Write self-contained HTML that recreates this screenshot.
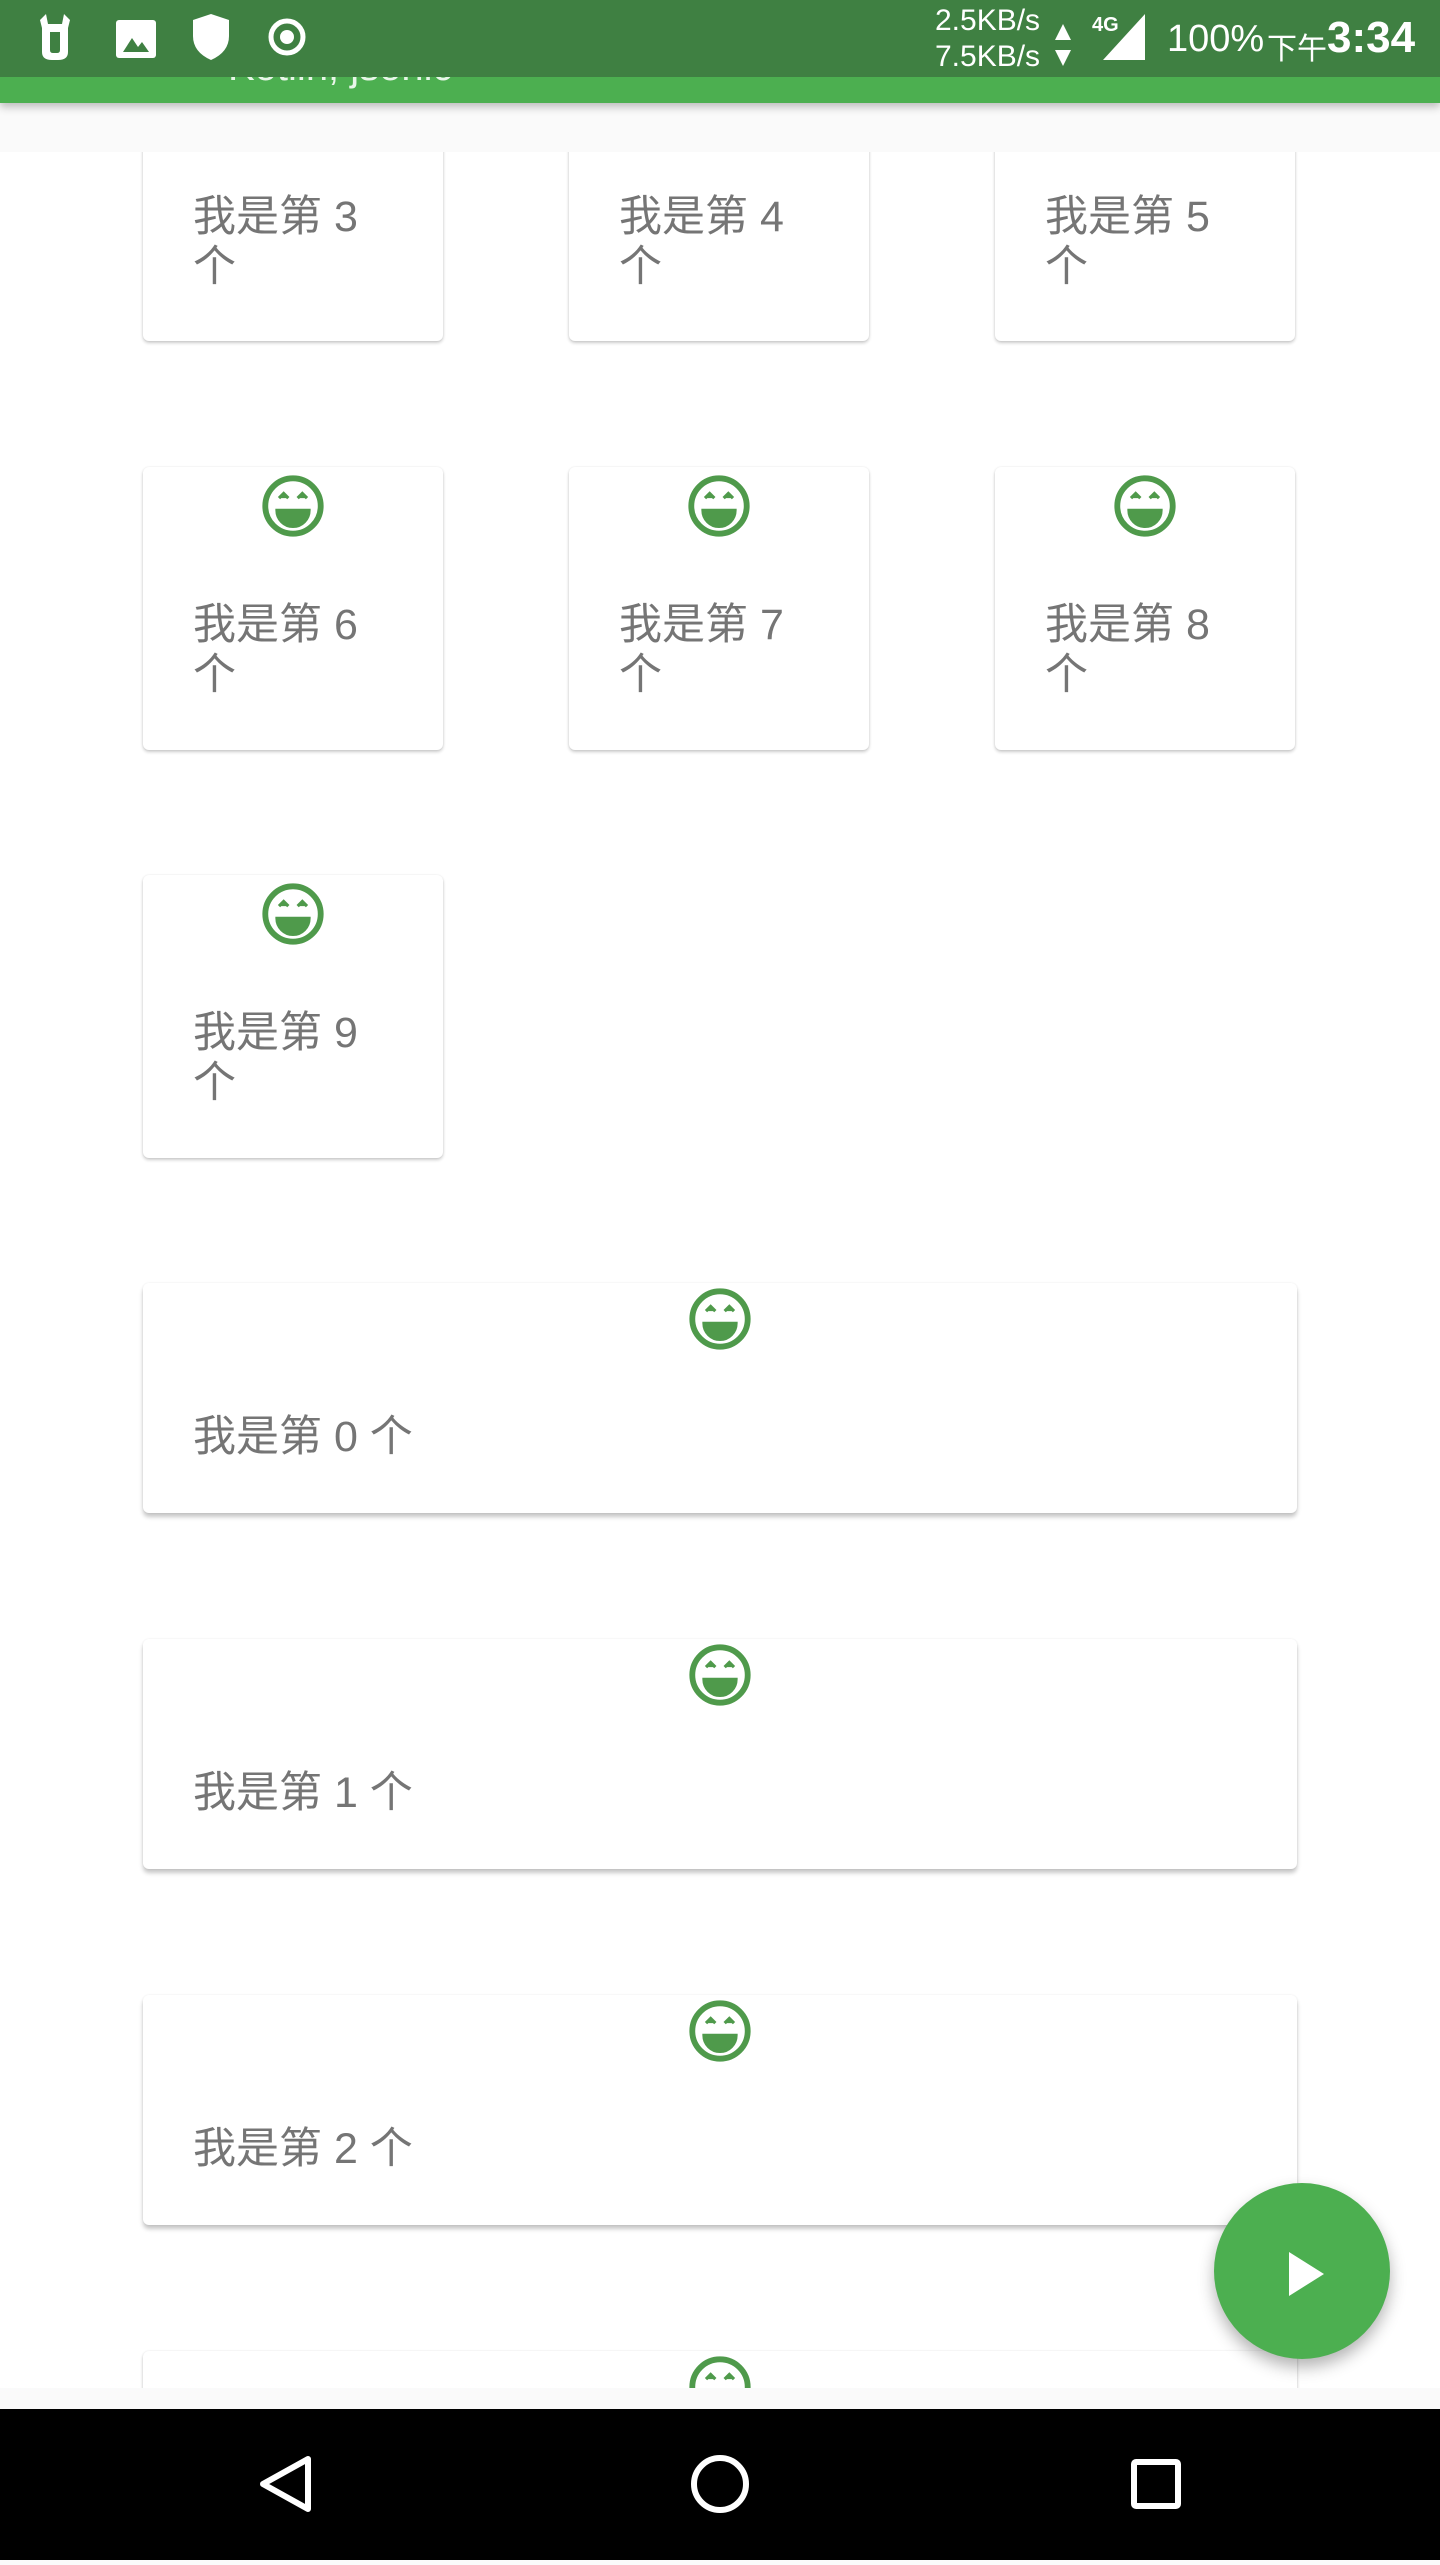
<!DOCTYPE html>
<html><head><meta charset="utf-8"><style>
*{margin:0;padding:0;box-sizing:border-box}
body{width:1440px;height:2560px;background:#fafafa;position:relative;overflow:hidden;font-family:"Liberation Sans","Noto Sans CJK SC",sans-serif}
.sb{position:absolute;left:0;top:0;width:1440px;height:77px;background:#3f8042;z-index:5;color:#fff}
.ab{position:absolute;left:0;top:77px;width:1440px;height:26px;background:#4caf50;z-index:4;box-shadow:0 4px 8px rgba(0,0,0,.25);overflow:hidden}
.list{position:absolute;left:0;top:152px;width:1440px;height:2236px;overflow:hidden;background:#fff}
.c{position:absolute;background:#fff;border-radius:6px;box-shadow:0 2px 3px rgba(0,0,0,.2),0 0 2px rgba(0,0,0,.08)}
.t{position:absolute;left:50px;color:#757575;font-size:43px;line-height:50px;font-family:"Liberation Sans","Noto Sans CJK SC",sans-serif}
.e{position:absolute;width:70px;height:70px}
.nav{position:absolute;left:0;top:2409px;width:1440px;height:151px;background:#000}
.fab{position:absolute;left:1214px;top:2183px;width:176px;height:176px;border-radius:50%;background:#4caf50;box-shadow:0 8px 16px rgba(0,0,0,.3)}
</style></head><body>
<div class="sb">
<svg width="380" height="77" style="position:absolute;left:0;top:0" fill="#fff">
<path d="M40 20 L46 14 L48 24 L62 24 L64 14 L70 20 L68 28 L68 52 Q68 60 58 60 L52 60 Q42 60 42 52 L42 28 Z M50 32 L50 50 Q50 53 53 53 L57 53 Q60 53 60 50 L60 32 Z"/>
<rect x="116" y="20" width="40" height="38" rx="3"/><path d="M123 52 L132 38 L138 47 L142 42 L149 52 Z" fill="#3f8042"/>
<path d="M193 20 L211 14 L229 20 L229 36 Q229 52 211 60 Q193 52 193 36 Z"/>
<circle cx="287" cy="37" r="16" fill="none" stroke="#fff" stroke-width="5"/><circle cx="287" cy="37" r="7"/>
</svg>
<div style="position:absolute;left:935px;top:3px;font-size:30px;line-height:36px">2.5KB/s<br>7.5KB/s</div>
<svg width="40" height="77" style="position:absolute;left:1052px;top:0" fill="#fff"><path d="M3 40 L11 24 L19 40Z M3 50 L19 50 L11 66Z"/></svg>
<div style="position:absolute;left:1092px;top:14px;font-size:20px;font-weight:bold">4G</div>
<svg width="50" height="77" style="position:absolute;left:1100px;top:0" fill="#fff"><path d="M45 14 L45 60 L3 60Z"/></svg>
<div style="position:absolute;left:1167px;top:18px;font-size:38px">100%</div>
<div style="position:absolute;left:1267px;top:24px;font-size:30px">下午</div>
<div style="position:absolute;left:1327px;top:13px;font-size:44px;font-weight:bold">3:34</div>
</div>
<div class="ab"><div style="position:absolute;left:228px;top:-32px;color:#e8f5e9;font-size:40px">Kotlin,  jsonic</div></div>
<div class="list">
<div class="c" style="left:143px;top:-93px;width:300px;height:282px"><div class="t" style="top:133px;width:180px">我是第 3<br>个</div></div>
<div class="c" style="left:569px;top:-93px;width:300px;height:282px"><div class="t" style="top:133px;width:180px">我是第 4<br>个</div></div>
<div class="c" style="left:995px;top:-93px;width:300px;height:282px"><div class="t" style="top:133px;width:180px">我是第 5<br>个</div></div>

<div class="c" style="left:143px;top:315px;width:300px;height:283px"><svg class="e" style="left:115px;top:4px" viewBox="0 0 24 24"><circle cx="12" cy="12" r="9.5" fill="none" stroke="#4f9a4b" stroke-width="2"/><path d="M6.5 13.5h11a5.5 5.5 0 0 1-11 0z M7.2 9.3l1.6-1.6 1.6 1.6 M13.6 9.3l1.6-1.6 1.6 1.6" fill="#4f9a4b" stroke="#4f9a4b" stroke-width="1.1"/></svg><div class="t" style="top:133px;width:180px">我是第 6<br>个</div></div>
<div class="c" style="left:569px;top:315px;width:300px;height:283px"><svg class="e" style="left:115px;top:4px" viewBox="0 0 24 24"><circle cx="12" cy="12" r="9.5" fill="none" stroke="#4f9a4b" stroke-width="2"/><path d="M6.5 13.5h11a5.5 5.5 0 0 1-11 0z M7.2 9.3l1.6-1.6 1.6 1.6 M13.6 9.3l1.6-1.6 1.6 1.6" fill="#4f9a4b" stroke="#4f9a4b" stroke-width="1.1"/></svg><div class="t" style="top:133px;width:180px">我是第 7<br>个</div></div>
<div class="c" style="left:995px;top:315px;width:300px;height:283px"><svg class="e" style="left:115px;top:4px" viewBox="0 0 24 24"><circle cx="12" cy="12" r="9.5" fill="none" stroke="#4f9a4b" stroke-width="2"/><path d="M6.5 13.5h11a5.5 5.5 0 0 1-11 0z M7.2 9.3l1.6-1.6 1.6 1.6 M13.6 9.3l1.6-1.6 1.6 1.6" fill="#4f9a4b" stroke="#4f9a4b" stroke-width="1.1"/></svg><div class="t" style="top:133px;width:180px">我是第 8<br>个</div></div>

<div class="c" style="left:143px;top:723px;width:300px;height:283px"><svg class="e" style="left:115px;top:4px" viewBox="0 0 24 24"><circle cx="12" cy="12" r="9.5" fill="none" stroke="#4f9a4b" stroke-width="2"/><path d="M6.5 13.5h11a5.5 5.5 0 0 1-11 0z M7.2 9.3l1.6-1.6 1.6 1.6 M13.6 9.3l1.6-1.6 1.6 1.6" fill="#4f9a4b" stroke="#4f9a4b" stroke-width="1.1"/></svg><div class="t" style="top:133px;width:180px">我是第 9<br>个</div></div>

<div class="c" style="left:143px;top:1131px;width:1154px;height:230px;box-shadow:0 4px 4px rgba(0,0,0,.22),0 0 2px rgba(0,0,0,.08)"><svg class="e" style="left:542px;top:1px" viewBox="0 0 24 24"><circle cx="12" cy="12" r="9.5" fill="none" stroke="#4f9a4b" stroke-width="2"/><path d="M6.5 13.5h11a5.5 5.5 0 0 1-11 0z M7.2 9.3l1.6-1.6 1.6 1.6 M13.6 9.3l1.6-1.6 1.6 1.6" fill="#4f9a4b" stroke="#4f9a4b" stroke-width="1.1"/></svg><div class="t" style="top:129px">我是第 0 个</div></div>
<div class="c" style="left:143px;top:1487px;width:1154px;height:230px;box-shadow:0 4px 4px rgba(0,0,0,.22),0 0 2px rgba(0,0,0,.08)"><svg class="e" style="left:542px;top:1px" viewBox="0 0 24 24"><circle cx="12" cy="12" r="9.5" fill="none" stroke="#4f9a4b" stroke-width="2"/><path d="M6.5 13.5h11a5.5 5.5 0 0 1-11 0z M7.2 9.3l1.6-1.6 1.6 1.6 M13.6 9.3l1.6-1.6 1.6 1.6" fill="#4f9a4b" stroke="#4f9a4b" stroke-width="1.1"/></svg><div class="t" style="top:129px">我是第 1 个</div></div>
<div class="c" style="left:143px;top:1843px;width:1154px;height:230px;box-shadow:0 4px 4px rgba(0,0,0,.22),0 0 2px rgba(0,0,0,.08)"><svg class="e" style="left:542px;top:1px" viewBox="0 0 24 24"><circle cx="12" cy="12" r="9.5" fill="none" stroke="#4f9a4b" stroke-width="2"/><path d="M6.5 13.5h11a5.5 5.5 0 0 1-11 0z M7.2 9.3l1.6-1.6 1.6 1.6 M13.6 9.3l1.6-1.6 1.6 1.6" fill="#4f9a4b" stroke="#4f9a4b" stroke-width="1.1"/></svg><div class="t" style="top:129px">我是第 2 个</div></div>
<div class="c" style="left:143px;top:2199px;width:1154px;height:230px"><svg class="e" style="left:542px;top:1px" viewBox="0 0 24 24"><circle cx="12" cy="12" r="9.5" fill="none" stroke="#4f9a4b" stroke-width="2"/><path d="M6.5 13.5h11a5.5 5.5 0 0 1-11 0z M7.2 9.3l1.6-1.6 1.6 1.6 M13.6 9.3l1.6-1.6 1.6 1.6" fill="#4f9a4b" stroke="#4f9a4b" stroke-width="1.1"/></svg></div>
</div>
<div class="fab"><svg width="176" height="176" viewBox="0 0 176 176"><path d="M75 69 L110 91 L75 113Z" fill="#fff"/></svg></div>
<div class="nav"><svg width="1440" height="151" viewBox="0 0 1440 151" fill="none" stroke="#fff" stroke-width="6" stroke-linejoin="round">
<path d="M308 50 L308 100 L263 75 Z"/>
<circle cx="720" cy="75" r="26"/>
<rect x="1134" y="53" width="44" height="44" rx="2"/>
</svg></div>
</body></html>
